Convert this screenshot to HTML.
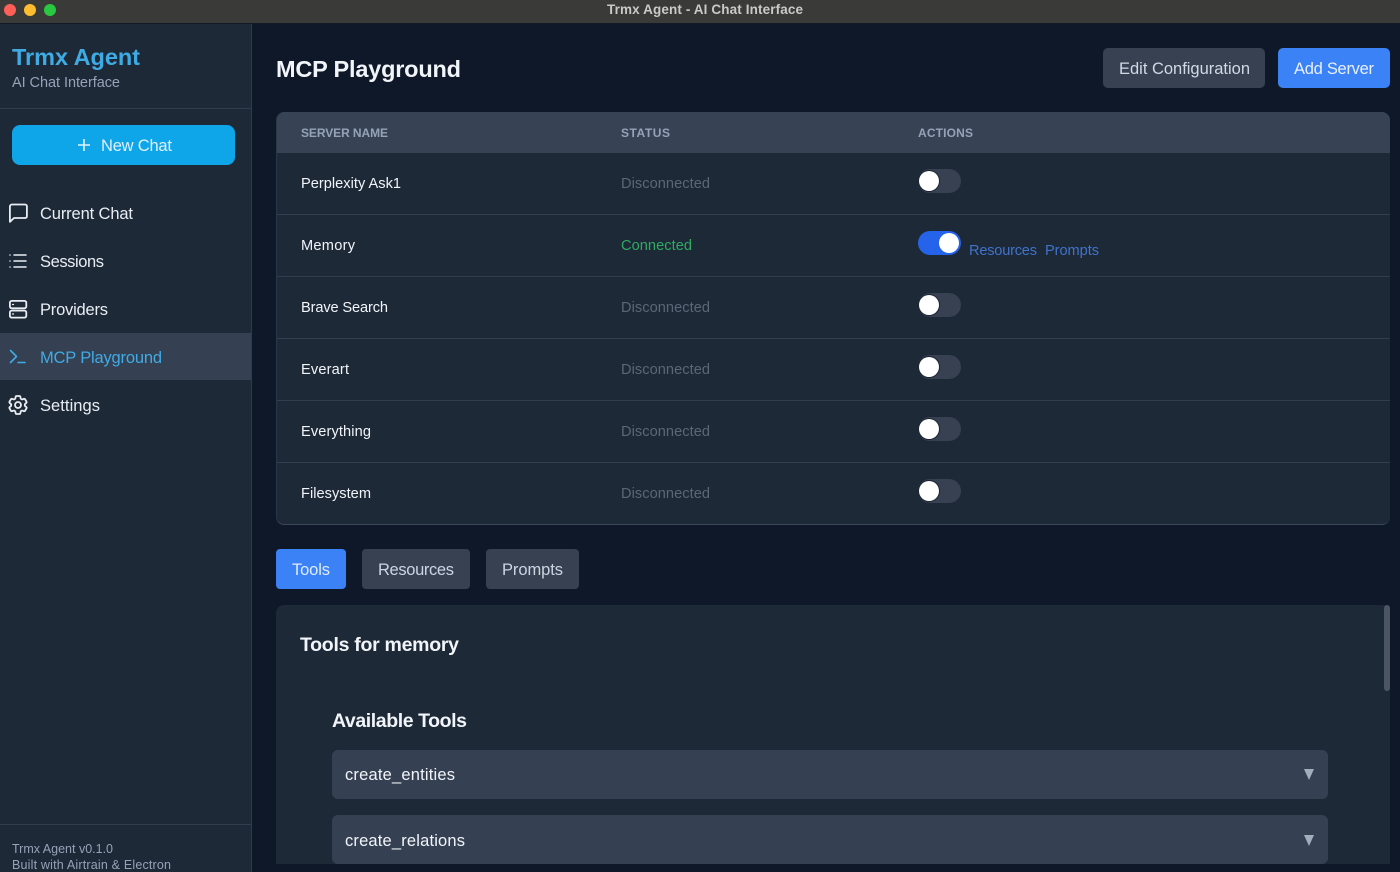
<!DOCTYPE html>
<html lang="en"><head><meta charset="utf-8"><title>Trmx Agent - AI Chat Interface</title>
<style>
*{box-sizing:border-box}
html,body{margin:0;padding:0;width:1400px;height:872px;overflow:hidden;background:#0f1829}
.b{position:absolute}
.k{position:absolute;width:20px;height:20px;border-radius:50%;background:#fff;box-shadow:0 0 0 1px #1b2431}
svg{position:absolute;left:0;top:0}
text{font-family:"Liberation Sans",sans-serif;white-space:pre}
</style></head><body>
<div class="b" style="left:0;top:0;width:1400px;height:24px;background:#3a3a39;border-bottom:1px solid #141a24"></div>
<div class="b" style="left:0;top:24px;width:252px;height:848px;background:#1e2937;border-right:1px solid #2f3a4a"></div>
<div class="b" style="left:0;top:108px;width:251px;height:1px;background:#323d4e"></div>
<div class="b" style="left:0;top:824px;width:251px;height:1px;background:#323d4e"></div>
<div class="b" style="left:12px;top:125px;width:223px;height:40px;border-radius:8px;background:#0ea5e9"></div>
<div class="b" style="left:0;top:333px;width:251px;height:47px;background:#354153"></div>
<div class="b" style="left:1103px;top:48px;width:162px;height:40px;border-radius:5px;background:#374151"></div>
<div class="b" style="left:1278px;top:48px;width:112px;height:40px;border-radius:5px;background:#3b82f6"></div>
<div class="b" style="left:276px;top:112px;width:1114px;height:413px;border-radius:8px;background:#1e2937;overflow:hidden;border-bottom:1px solid #3a4658;border-left:1px solid #2b3747">
<div class="b" style="left:0;top:0;width:1114px;height:41px;background:#374355"></div>
<div class="b" style="left:0;top:102px;width:1114px;height:1px;background:#323e4f"></div>
<div class="b" style="left:0;top:164px;width:1114px;height:1px;background:#323e4f"></div>
<div class="b" style="left:0;top:226px;width:1114px;height:1px;background:#323e4f"></div>
<div class="b" style="left:0;top:288px;width:1114px;height:1px;background:#323e4f"></div>
<div class="b" style="left:0;top:350px;width:1114px;height:1px;background:#323e4f"></div>
</div>
<div class="b" style="left:918px;top:169px;width:43px;height:24px;border-radius:12px;background:#374151"></div>
<div class="k" style="left:919px;top:171px"></div>
<div class="b" style="left:918px;top:231px;width:43px;height:24px;border-radius:12px;background:#2563eb"></div>
<div class="b" style="left:939px;top:233px;width:20px;height:20px;border-radius:50%;background:#fff"></div>
<div class="b" style="left:918px;top:293px;width:43px;height:24px;border-radius:12px;background:#374151"></div>
<div class="k" style="left:919px;top:295px"></div>
<div class="b" style="left:918px;top:355px;width:43px;height:24px;border-radius:12px;background:#374151"></div>
<div class="k" style="left:919px;top:357px"></div>
<div class="b" style="left:918px;top:417px;width:43px;height:24px;border-radius:12px;background:#374151"></div>
<div class="k" style="left:919px;top:419px"></div>
<div class="b" style="left:918px;top:479px;width:43px;height:24px;border-radius:12px;background:#374151"></div>
<div class="k" style="left:919px;top:481px"></div>
<div class="b" style="left:276px;top:549px;width:70px;height:40px;border-radius:4px;background:#3b82f6"></div>
<div class="b" style="left:362px;top:549px;width:108px;height:40px;border-radius:4px;background:#374151"></div>
<div class="b" style="left:486px;top:549px;width:93px;height:40px;border-radius:4px;background:#374151"></div>
<div class="b" style="left:276px;top:605px;width:1114px;height:259px;border-radius:8px 8px 0 0;background:#1e2937"></div>
<div class="b" style="left:1384px;top:605px;width:6px;height:86px;border-radius:3px;background:#4b5563"></div>
<div class="b" style="left:332px;top:750px;width:996px;height:49px;border-radius:6px;background:#354153"></div>
<div class="b" style="left:332px;top:815px;width:996px;height:49px;border-radius:6px;background:#354153"></div>
<svg width="1400" height="872" viewBox="0 0 1400 872">
<circle cx="10" cy="10" r="6" fill="#ff5f57"/><circle cx="30" cy="10" r="6" fill="#febc2e"/><circle cx="50" cy="10" r="6" fill="#28c840"/>
<text x="607" y="14" font-size="13.5" font-weight="700" fill="#c9c9c9" textLength="196">Trmx Agent - AI Chat Interface</text>
<text x="12" y="65" font-size="23.5" font-weight="700" fill="#3fabe4" textLength="128">Trmx Agent</text>
<text x="12" y="87" font-size="14.5" fill="#94a3b8" textLength="108">AI Chat Interface</text>
<path d="M78 145h12M84 139v12" stroke="#e0f2fe" stroke-width="1.6" fill="none"/>
<text x="101" y="151" font-size="16.5" fill="#e0f2fe" textLength="71">New Chat</text>
<g fill="none" stroke="#e8edf3" stroke-width="1.8" stroke-linecap="round" stroke-linejoin="round">
<path transform="translate(6 201)" d="M3.9 5.5a2 2 0 0 1 2-2h13.2a1.8 1.8 0 0 1 1.8 1.8v9.9a1.8 1.8 0 0 1-1.8 1.8H8l-4.1 3.8z"/>
<path transform="translate(6 249)" stroke-width="1.5" d="M8 6h12M8 12h12M8 18h12M4 6h.01M4 12h.01M4 18h.01"/>
<g transform="translate(6 297)"><rect x="3.9" y="3.9" width="16.4" height="7.4" rx="1.8"/><rect x="3.9" y="13.6" width="16.4" height="7" rx="1.8"/><path stroke-width="1.3" d="M6.5 7.5h1M6.5 17h1"/></g>
<path transform="translate(6 345)" stroke="#3fabe4" stroke-width="1.6" d="M4.5 5.5l6 6-6 6M12 17.5h7"/>
<g transform="translate(6 393)"><path d="M9.594 3.94c.09-.542.56-.94 1.11-.94h2.593c.55 0 1.02.398 1.11.94l.213 1.281c.063.374.313.686.645.87.074.04.147.083.22.127.325.196.72.257 1.075.124l1.217-.456a1.125 1.125 0 0 1 1.37.49l1.296 2.247a1.125 1.125 0 0 1-.26 1.431l-1.003.827c-.293.241-.438.613-.43.992a7.723 7.723 0 0 1 0 .255c-.008.378.137.75.43.991l1.004.827c.424.35.534.955.26 1.43l-1.298 2.247a1.125 1.125 0 0 1-1.369.491l-1.217-.456c-.355-.133-.75-.072-1.076.124a6.47 6.47 0 0 1-.22.128c-.331.183-.581.495-.644.869l-.213 1.281c-.09.543-.56.94-1.11.94h-2.594c-.55 0-1.019-.398-1.11-.94l-.213-1.281c-.062-.374-.312-.686-.644-.87a6.52 6.52 0 0 1-.22-.127c-.325-.196-.72-.257-1.076-.124l-1.217.456a1.125 1.125 0 0 1-1.369-.49l-1.297-2.247a1.125 1.125 0 0 1 .26-1.431l1.004-.827c.292-.24.437-.613.43-.991a6.932 6.932 0 0 1 0-.255c.007-.38-.138-.751-.43-.992l-1.004-.827a1.125 1.125 0 0 1-.26-1.43l1.297-2.247a1.125 1.125 0 0 1 1.37-.491l1.216.456c.356.133.751.072 1.076-.124.072-.044.146-.086.22-.128.332-.183.582-.495.644-.869l.214-1.28Z"/><circle cx="12" cy="12" r="3"/></g>
</g>
<g font-size="16.5" fill="#e8edf3">
<text x="40" y="219" textLength="93">Current Chat</text>
<text x="40" y="267" textLength="64">Sessions</text>
<text x="40" y="315" textLength="68">Providers</text>
<text x="40" y="363" textLength="122" fill="#3fabe4">MCP Playground</text>
<text x="40" y="411" textLength="60">Settings</text>
</g>
<text x="12" y="853" font-size="12.5" fill="#94a3b8" textLength="101">Trmx Agent v0.1.0</text>
<text x="12" y="869" font-size="12.5" fill="#94a3b8" textLength="159">Built with Airtrain &amp; Electron</text>
<text x="276" y="77" font-size="23.5" font-weight="700" fill="#f1f5f9" textLength="185">MCP Playground</text>
<text x="1119" y="74" font-size="16.5" fill="#d1d9e4" textLength="131">Edit Configuration</text>
<text x="1294" y="74" font-size="16.5" fill="#e8f0fe" textLength="80">Add Server</text>
<g font-size="12" font-weight="700" fill="#94a3b8">
<text x="301" y="137" textLength="87">SERVER NAME</text>
<text x="621" y="137" textLength="49">STATUS</text>
<text x="918" y="137" textLength="55">ACTIONS</text>
</g>
<g font-size="14.6" fill="#f1f5f9">
<text x="301" y="188" textLength="100">Perplexity Ask1</text>
<text x="301" y="250" textLength="54">Memory</text>
<text x="301" y="312" textLength="87">Brave Search</text>
<text x="301" y="374" textLength="48">Everart</text>
<text x="301" y="436" textLength="70">Everything</text>
<text x="301" y="498" textLength="70">Filesystem</text>
</g>
<g font-size="14.6" fill="#5b6676">
<text x="621" y="188" textLength="89">Disconnected</text>
<text x="621" y="250" textLength="71" fill="#2eaa62">Connected</text>
<text x="621" y="312" textLength="89">Disconnected</text>
<text x="621" y="374" textLength="89">Disconnected</text>
<text x="621" y="436" textLength="89">Disconnected</text>
<text x="621" y="498" textLength="89">Disconnected</text>
</g>
<text x="969" y="255" font-size="14.6" fill="#3f73cc" textLength="68">Resources</text>
<text x="1045" y="255" font-size="14.6" fill="#3f73cc" textLength="54">Prompts</text>
<text x="292" y="575" font-size="16.5" fill="#e0ebfd" textLength="38">Tools</text>
<text x="378" y="575" font-size="16.5" fill="#cbd5e1" textLength="76">Resources</text>
<text x="502" y="575" font-size="16.5" fill="#cbd5e1" textLength="61">Prompts</text>
<text x="300" y="651" font-size="19.5" font-weight="700" fill="#f1f5f9" textLength="159">Tools for memory</text>
<text x="332" y="727" font-size="19.5" font-weight="700" fill="#f1f5f9" textLength="135">Available Tools</text>
<text x="345" y="780" font-size="16.5" fill="#f1f5f9" textLength="110">create_entities</text>
<text x="345" y="846" font-size="16.5" fill="#f1f5f9" textLength="120">create_relations</text>
<path d="M1304 769h10l-5 11z" fill="#a3aebd"/>
<path d="M1304 835h10l-5 11z" fill="#a3aebd"/>
</svg>
</body></html>
